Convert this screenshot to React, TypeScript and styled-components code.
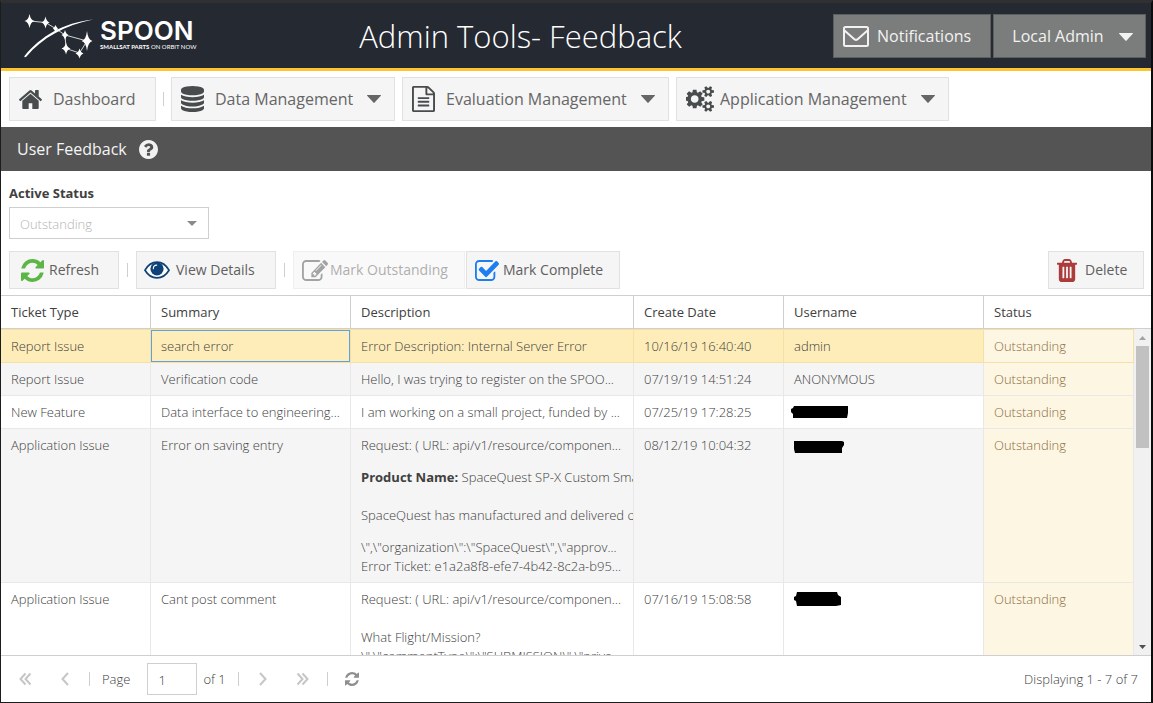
import React from 'react';
import styled, { createGlobalStyle, css } from 'styled-components';

const GlobalStyle = createGlobalStyle`
  *, *::before, *::after { box-sizing: border-box; }
  body {
    margin: 0;
    background: #fff;
    color: #404040;
    font: 400 13px/19px 'Open Sans', sans-serif;
  }
  button, input, select { font: inherit; color: inherit; margin: 0; border-radius: 0; }
`;

/* ---------- frame and header ---------- */

const Frame = styled.div`
  display: flex;
  flex-direction: column;
  height: 100vh;
  min-height: 480px;
  border-style: solid;
  border-width: 3px 2px 1px 1px;
  border-color: #303030 #0c0c0c #1c1c1c #1c1c1c;
`;

const Header = styled.header`
  display: flex;
  align-items: center;
  flex: none;
  height: 68px;
  padding: 0 5px 0 22px;
  background: #252932;
  border-bottom: 3px solid #fdc42d;
`;

const Brand = styled.a`
  display: flex;
  align-items: center;
  gap: 7px;
  width: 185px;
  color: #fff;
  text-decoration: none;
`;

const BrandText = styled.span`
  display: flex;
  flex-direction: column;
  white-space: nowrap;
`;

const BrandName = styled.span`
  font: 600 26px/22px Inter, sans-serif;
`;

const BrandTag = styled.span`
  font: 400 6px/10px Lato, sans-serif;
  b { font-weight: 700; }
`;

const PageTitle = styled.h1`
  flex: 1;
  margin: 0;
  color: #fff;
  font-size: 31px;
  font-weight: 300;
  line-height: 42px;
  text-align: center;
  white-space: nowrap;
`;

const HeaderActions = styled.div`
  display: flex;
  gap: 2px;
`;

/* ---------- buttons ---------- */

type BtnProps = { $width: number; $gap?: number; $pad?: number };

const BaseButton = styled.button<BtnProps>`
  display: flex;
  align-items: center;
  flex: none;
  width: ${(p) => p.$width}px;
  gap: ${(p) => p.$gap ?? 6}px;
  white-space: nowrap;
  text-align: left;
  cursor: pointer;
`;

const HeaderButton = styled(BaseButton)`
  height: 44px;
  padding: 2px 12px 0 9px;
  border: 1px solid #5c5f60;
  background: #7b7d7c;
  color: #f2f2f2;
  font-size: 16px;
`;

const NavButton = styled(BaseButton)`
  height: 44px;
  padding: 0 13px 0 9px;
  border: 1px solid #e1e1e1;
  background: #f5f5f5;
  color: #666;
  font-size: 16px;
`;

const ToolButton = styled(BaseButton)`
  height: 38px;
  padding: 0 8px 2px ${(p) => p.$pad ?? 8}px;
  border: 1px solid #e1e1e1;
  background: #f5f5f5;
  color: #606060;
  font-size: 14px;
  &:disabled { opacity: 0.5; cursor: default; }
  svg { margin-top: 2px; }
`;

const Caret = styled.svg`
  display: block;
  width: 14px;
  height: 8px;
  margin-left: auto;
  fill: currentColor;
`;

const Separator = styled.span<{ $space?: number }>`
  flex: none;
  width: 1px;
  height: 14px;
  margin: 0 ${(p) => p.$space ?? 8}px;
  background: #cfcfcf;
`;

/* ---------- bars ---------- */

const NavBar = styled.nav`
  display: flex;
  align-items: center;
  flex: none;
  gap: 7px;
  height: 56px;
  padding: 0 8px;
`;

const NavGroup = styled.div`
  display: flex;
  align-items: center;
`;

const PanelTitle = styled.div`
  display: flex;
  align-items: center;
  flex: none;
  gap: 12px;
  height: 44px;
  padding: 0 16px;
  background: #545454;
  color: #f5f5f5;
  h2 { margin: 0; font-size: 16px; font-weight: 400; line-height: 22px; }
`;

const HelpButton = styled.button`
  display: flex;
  padding: 0;
  border: 0;
  background: none;
  cursor: pointer;
`;

const Filters = styled.div`
  display: flex;
  flex-direction: column;
  align-items: flex-start;
  flex: none;
  gap: 4px;
  padding: 13px 8px 12px;
  label { font-weight: 700; }
`;

const SelectBox = styled.div`
  display: grid;
  align-items: center;
  width: 200px;
  height: 32px;
  > * { grid-area: 1 / 1; }
`;

const Select = styled.select`
  appearance: none;
  width: 100%;
  height: 32px;
  padding: 2px 30px 0 10px;
  border: 1px solid #cfcfcf;
  background: #fff;
  color: #b4b4b4;
  font-weight: 300;
`;

const SelectArrow = styled.svg`
  justify-self: end;
  width: 10px;
  height: 5px;
  margin-right: 12px;
  fill: #8a8a8a;
  pointer-events: none;
`;

const Toolbar = styled.div`
  display: flex;
  align-items: center;
  flex: none;
  padding: 0 7px 6px 8px;
`;

const ToolGroup = styled.div`
  display: flex;
  gap: 1px;
`;

const Spacer = styled.span`
  flex: 1;
`;

/* ---------- grid ---------- */

const Table = styled.table`
  width: 100%;
  table-layout: fixed;
  border-collapse: separate;
  border-spacing: 0;
`;

const HeadTable = styled(Table)`
  flex: none;
  border-top: 1px solid #cfcfcf;
  border-bottom: 1px solid #cfcfcf;
`;

const HeadCell = styled.th`
  height: 32px;
  padding: 0 10px;
  border-right: 1px solid #cfcfcf;
  font-weight: 400;
  text-align: left;
  &:last-child { border-right: 0; }
`;

const GridBody = styled.div`
  display: flex;
  flex: 1;
  min-height: 0;
`;

const Viewport = styled.div`
  flex: 1;
  min-width: 0;
  overflow: hidden;
`;

const Cell = styled.td<{ $status?: boolean; $focused?: boolean }>`
  padding: 7px 10px 6px;
  overflow: hidden;
  border-right: 1px solid #e8e8e8;
  border-bottom: 1px solid #e8e8e8;
  font-weight: 300;
  vertical-align: top;
  white-space: nowrap;
  ${(p) => p.$status && css`background: #fdf6e3; color: #8a6d3b;`}
  ${(p) => p.$focused && css`box-shadow: inset 0 0 0 1px #5fa2dd;`}
`;

const Row = styled.tr<{ $selected?: boolean }>`
  &:nth-child(even) { background: #f5f5f5; }
  ${(p) => p.$selected && css`
    background: #feedb9;
    ${Cell} { border-color: #f5e1a3; border-top: 1px solid #f5e1a3; }
  `}
`;

const Paragraph = styled.p`
  margin: 13px 0;
  strong { font-weight: 700; }
`;

const Redaction = styled.svg`
  display: block;
  width: 58px;
  height: 16px;
  margin: 2px 0 1px -3px;
  overflow: visible;
  fill: #000;
`;

const ScrollBar = styled.div`
  display: flex;
  flex-direction: column;
  align-items: center;
  flex: none;
  width: 17px;
  background: #f1f1f1;
`;

const ScrollArrow = styled.button`
  display: flex;
  align-items: center;
  justify-content: center;
  width: 17px;
  height: 17px;
  padding: 0;
  border: 0;
  background: none;
`;

const ScrollTrack = styled.div`
  flex: 1;
  width: 13px;
`;

const ScrollThumb = styled.div`
  height: 35%;
  background: #c1c1c1;
`;

/* ---------- paging ---------- */

const Pager = styled.footer`
  display: flex;
  align-items: center;
  flex: none;
  height: 47px;
  padding: 0 13px 0 12px;
  border-top: 1px solid #cfcfcf;
  font-weight: 300;
`;

const PageButton = styled.button`
  display: flex;
  align-items: center;
  justify-content: center;
  width: 24px;
  height: 24px;
  padding: 0;
  border: 0;
  background: none;
  color: #8f8f8f;
  & + & { margin-left: 16px; }
  &:disabled { color: #c6c6c6; }
`;

const PageLabel = styled.label`
  display: flex;
  align-items: center;
  gap: 17px;
  padding-right: 6px;
`;

const PageInput = styled.input`
  width: 50px;
  height: 32px;
  padding: 2px 10px 0;
  border: 1px solid #cfcfcf;
  background: #fff;
  font-weight: 300;
`;

/* ---------- drawings ---------- */

type IconProps = { box: string; w: number; h: number; d: string; color?: string };

const Icon = ({ box, w, h, d, color = 'currentColor' }: IconProps) => (
  <svg viewBox={box} width={w} height={h} fill={color} preserveAspectRatio="none" aria-hidden="true">
    <path d={d} />
  </svg>
);

const P = {
  home: 'M1472 992v480q0 26-19 45t-45 19h-384v-384h-256v384h-384q-26 0-45-19t-19-45v-480q0-1 .5-3t.5-3l575-474 575 474q1 2 1 6zm223-69l-62 74q-8 9-21 11h-3q-13 0-21-7l-692-577-692 577q-12 8-24 7-13-2-21-11l-62-74q-8-10-7-23.5t11-21.5l719-599q32-26 76-26t76 26l244 204v-195q0-14 9-23t23-9h192q14 0 23 9t9 23v408l219 182q10 8 11 21.5t-7 23.5z',
  database: 'M896 768q237 0 443-43t325-127v170q0 69-103 128t-280 93.5-385 34.5-385-34.5-280-93.5-103-128v-170q119 84 325 127t443 43zm0 768q237 0 443-43t325-127v170q0 69-103 128t-280 93.5-385 34.5-385-34.5-280-93.5-103-128v-170q119 84 325 127t443 43zm0-384q237 0 443-43t325-127v170q0 69-103 128t-280 93.5-385 34.5-385-34.5-280-93.5-103-128v-170q119 84 325 127t443 43zm0-1152q208 0 385 34.5t280 93.5 103 128v128q0 69-103 128t-280 93.5-385 34.5-385-34.5-280-93.5-103-128v-128q0-69 103-128t280-93.5 385-34.5z',
  file: 'M1596 380q28 28 48 76t20 88v1152q0 40-28 68t-68 28h-1344q-40 0-68-28t-28-68v-1600q0-40 28-68t68-28h896q40 0 88 20t76 48zm-444-244v376h376q-10-29-22-41l-313-313q-12-12-41-22zm384 1528v-1024h-416q-40 0-68-28t-28-68v-416h-768v1536h1280zm-1024-864q0-14 9-23t23-9h704q14 0 23 9t9 23v64q0 14-9 23t-23 9h-704q-14 0-23-9t-9-23v-64zm736 224q14 0 23 9t9 23v64q0 14-9 23t-23 9h-704q-14 0-23-9t-9-23v-64q0-14 9-23t23-9h704zm0 256q14 0 23 9t9 23v64q0 14-9 23t-23 9h-704q-14 0-23-9t-9-23v-64q0-14 9-23t23-9h704z',
  cogs: 'M832 896q0-106-75-181t-181-75-181 75-75 181 75 181 181 75 181-75 75-181zm768 512q0-52-38-90t-90-38-90 38-38 90q0 53 37.5 90.5t90.5 37.5 90.5-37.5 37.5-90.5zm0-1024q0-52-38-90t-90-38-90 38-38 90q0 53 37.5 90.5t90.5 37.5 90.5-37.5 37.5-90.5zm-384 421v185q0 10-7 19.5t-16 10.5l-155 24q-11 35-32 76 34 48 90 115 7 11 7 20 0 12-7 19-23 30-82.5 89.5t-78.5 59.5q-11 0-21-7l-115-90q-37 19-77 31-11 108-23 155-7 24-30 24h-186q-11 0-20-7.5t-10-17.5l-23-153q-34-10-75-31l-118 89q-7 7-20 7-11 0-21-8-144-133-144-160 0-9 7-19 10-14 41-53t47-61q-23-44-35-82l-152-24q-10-1-17-9.5t-7-19.5v-185q0-10 7-19.5t16-10.5l155-24q11-35 32-76-34-48-90-115-7-11-7-20 0-12 7-20 22-30 82-89t79-59q11 0 21 7l115 90q34-18 77-32 11-108 23-154 7-24 30-24h186q11 0 20 7.5t10 17.5l23 153q34 10 75 31l118-89q8-7 20-7 11 0 21 8 144 133 144 160 0 8-7 19-12 16-42 54t-45 60q23 48 34 82l152 23q10 2 17 10.5t7 19.5zm640 533v140q0 16-149 31-12 27-30 52 51 113 51 138 0 4-4 7-122 71-124 71-8 0-46-47t-52-68q-20 2-30 2t-30-2q-14 21-52 68t-46 47q-2 0-124-71-4-3-4-7 0-25 51-138-18-25-30-52-149-15-149-31v-140q0-16 149-31 13-29 30-52-51-113-51-138 0-4 4-7 4-2 35-20t59-34 30-16q8 0 46 46.5t52 67.5q20-2 30-2t30 2q51-71 92-112l6-2q4 0 124 70 4 3 4 7 0 25-51 138 17 23 30 52 149 15 149 31zm0-1024v140q0 16-149 31-12 27-30 52 51 113 51 138 0 4-4 7-122 71-124 71-8 0-46-47t-52-68q-20 2-30 2t-30-2q-14 21-52 68t-46 47q-2 0-124-71-4-3-4-7 0-25 51-138-18-25-30-52-149-15-149-31v-140q0-16 149-31 13-29 30-52-51-113-51-138 0-4 4-7 4-2 35-20t59-34 30-16q8 0 46 46.5t52 67.5q20-2 30-2t30 2q51-71 92-112l6-2q4 0 124 70 4 3 4 7 0 25-51 138 17 23 30 52 149 15 149 31z',
  help: 'M1024 1376v-192q0-14-9-23t-23-9h-192q-14 0-23 9t-9 23v192q0 14 9 23t23 9h192q14 0 23-9t9-23zm256-672q0-88-55.5-163t-138.5-116-170-41q-243 0-371 213-15 24 8 42l132 100q7 6 19 6 16 0 25-12 53-68 86-92 34-24 86-24 48 0 85.5 26t37.5 59q0 38-20 61t-68 45q-63 28-115.5 86.5t-52.5 125.5v36q0 14 9 23t23 9h192q14 0 23-9t9-23q0-19 21.5-49.5t54.5-49.5q32-18 49-28.5t46-35 44.5-48 28-60.5 12.5-81zm384 192q0 209-103 385.5t-279.5 279.5-385.5 103-385.5-103-279.5-279.5-103-385.5 103-385.5 279.5-279.5 385.5-103 385.5 103 279.5 279.5 103 385.5z',
  refresh: 'M1639 1056q0 5-1 7-64 268-268 434.5t-478 166.5q-146 0-282.5-55t-243.5-157l-129 129q-19 19-45 19t-45-19-19-45v-448q0-26 19-45t45-19h448q26 0 45 19t19 45-19 45l-137 137q71 66 161 102t187 36q134 0 250-65t186-179q11-17 53-117 8-23 30-23h192q13 0 22.5 9.5t9.5 22.5zm25-800v448q0 26-19 45t-45 19h-448q-26 0-45-19t-19-45 19-45l138-138q-148-137-349-137-134 0-250 65t-186 179q-11 17-53 117-8 23-30 23h-199q-13 0-22.5-9.5t-9.5-22.5v-7q65-268 270-434.5t480-166.5q146 0 284 55.5t245 156.5l130-129q19-19 45-19t45 19 19 45z',
  pencil: 'M888 1184l116-116-152-152-116 116v56h96v96h56zm440-720q-16-16-33 1l-350 350q-17 17-1 33t33-1l350-350q17-17 1-33zm80 594v190q0 119-84.5 203.5t-203.5 84.5h-832q-119 0-203.5-84.5t-84.5-203.5v-832q0-119 84.5-203.5t203.5-84.5h832q63 0 117 25 15 7 18 23 3 17-9 29l-49 49q-14 14-32 8-23-6-45-6h-832q-66 0-113 47t-47 113v832q0 66 47 113t113 47h832q66 0 113-47t47-113v-126q0-13 9-22l64-64q15-15 35-7t20 29zm-96-738l288 288-672 672h-288v-288zm444 132l-92 92-288-288 92-92q28-28 68-28t68 28l152 152q28 28 28 68t-28 68z',
  check: 'M1408 930v318q0 119-84.5 203.5t-203.5 84.5h-832q-119 0-203.5-84.5t-84.5-203.5v-832q0-119 84.5-203.5t203.5-84.5h832q63 0 117 25 15 7 18 23 3 17-9 29l-49 49q-10 10-23 10-3 0-9-2-23-6-45-6h-832q-66 0-113 47t-47 113v832q0 66 47 113t113 47h832q66 0 113-47t47-113v-254q0-13 9-22l64-64q10-10 23-10 6 0 12 3 20 8 20 29zm231-489l-814 814q-24 24-57 24t-57-24l-430-430q-24-24-24-57t24-57l110-110q24-24 57-24t57 24l263 263 647-647q24-24 57-24t57 24l110 110q24 24 24 57t-24 57z',
  trash: 'M704 1376v-704q0-14-9-23t-23-9h-64q-14 0-23 9t-9 23v704q0 14 9 23t23 9h64q14 0 23-9t9-23zm256 0v-704q0-14-9-23t-23-9h-64q-14 0-23 9t-9 23v704q0 14 9 23t23 9h64q14 0 23-9t9-23zm256 0v-704q0-14-9-23t-23-9h-64q-14 0-23 9t-9 23v704q0 14 9 23t23 9h64q14 0 23-9t9-23zm-544-992h448l-48-117q-7-9-17-11h-317q-10 2-17 11zm928 32v64q0 14-9 23t-23 9h-96v948q0 83-47 143.5t-113 60.5h-832q-66 0-113-58.5t-47-141.5v-952h-96q-14 0-23-9t-9-23v-64q0-14 9-23t23-9h309l70-167q15-37 54-63t79-26h320q40 0 79 26t54 63l70 167h309q14 0 23 9t9 23z',
};

const Down = () => (
  <Caret viewBox="0 0 14 8" aria-hidden="true"><path d="M.4 0h13.2c.4 0 .5.4.2.7L7.6 7.6a.8.8 0 0 1-1.2 0L.2.7C-.1.4 0 0 .4 0z" /></Caret>
);

const EnvelopeIcon = () => (
  <svg width="26" height="21" viewBox="0 0 26 21" fill="none" stroke="currentColor" strokeWidth="2" aria-hidden="true">
    <rect x="1" y="1" width="24" height="19" rx="1.5" />
    <path d="M1.5 4.500L10.500 12.500c1.800 1.900 3.200 1.900 5 0L24.500 4.500" />
  </svg>
);

const EyeIcon = () => (
  <svg width="26" height="18" viewBox="0 0 26 18" aria-hidden="true">
    <path d="M1 9.200C4 4 8.300 1.200 13 1.200S22 4 25 9.200C22 14.200 17.700 16.900 13 16.900S4 14.200 1 9.200z" fill="#fff" stroke="#0e4279" strokeWidth="1.700" />
    <circle cx="13" cy="7.800" r="6.600" fill="#0e4279" />
    <path d="M9.300 7.700c0-2 1.500-3.500 3.400-3.600" fill="none" stroke="#fff" strokeWidth="1.100" strokeLinecap="round" />
  </svg>
);

const star = (x: number, y: number, rx: number, ry: number) =>
  `M${x} ${y - ry}Q${x + 1} ${y - 1} ${x + rx} ${y}Q${x + 1} ${y + 1} ${x} ${y + ry}Q${x - 1} ${y + 1} ${x - rx} ${y}Q${x - 1} ${y - 1} ${x} ${y - ry}z`;

const Constellation = () => (
  <svg width="70" height="46" viewBox="0 0 70 46" fill="#fff" aria-hidden="true">
    <path d="M6.500 8L22.500 9.500 32.500 15.500 42 22 64 28 56.500 40 43 35.500 42 22" fill="none" stroke="#fff" strokeWidth=".8" />
    <path d="M1.500 43C18 23 40 10 70 6.500 42 12 19 25 3.500 43.500c-1 1.200-2.500.8-2-.5z" />
    <path d={star(6.5, 8, 5, 7)} />
    <path d={star(22.5, 9.5, 4, 6)} />
    <path d={star(32.5, 15.5, 2.5, 3.5)} />
    <path d={star(42, 22, 3.5, 5)} />
    <path d={star(64, 28, 5.5, 10)} />
    <path d={star(43, 35.5, 4.5, 6)} />
    <path d={star(56.5, 40.5, 4, 5)} />
  </svg>
);

const Chevrons = ({ d, w }: { d: string; w: number }) => (
  <svg width={w} height="14" viewBox={`0 0 ${w} 14`} fill="none" stroke="currentColor" strokeWidth="2" aria-hidden="true">
    <path d={d} />
  </svg>
);

/* ---------- data ---------- */

const WIDTHS = [150, 200, undefined, 150, 200, 150];
const HEADINGS = ['Ticket Type', 'Summary', 'Description', 'Create Date', 'Username', 'Status'];

const REDACTED = [
  'M3 1H57V8L56 13H2V9L0 7V4L2 3z',
  'M3 3H51L53 4V7L51 10V15H4L3 11z',
  'M6 0H46L47 3 50 5V13L45 14H6L5 9 3 8V5L5 4z',
];

type Ticket = {
  type: string;
  summary: string;
  description: React.ReactNode;
  date: string;
  user: React.ReactNode;
};

const mask = (i: number) => (
  <Redaction viewBox="0 0 58 16" role="img" aria-label="Hidden user"><path d={REDACTED[i]} /></Redaction>
);

const TICKETS: Ticket[] = [
  { type: 'Report Issue', summary: 'search error', description: 'Error Description: Internal Server Error', date: '10/16/19 16:40:40', user: 'admin' },
  { type: 'Report Issue', summary: 'Verification code', description: 'Hello, I was trying to register on the SPOO...', date: '07/19/19 14:51:24', user: 'ANONYMOUS' },
  { type: 'New Feature', summary: 'Data interface to engineering...', description: 'I am working on a small project, funded by ...', date: '07/25/19 17:28:25', user: mask(0) },
  {
    type: 'Application Issue',
    summary: 'Error on saving entry',
    description: (
      <>
        Request: ( URL: api/v1/resource/componen...
        <Paragraph><strong>Product Name:</strong> SpaceQuest SP-X Custom Sma<br /><br />SpaceQuest has manufactured and delivered o</Paragraph>
        {'\\",\\"organization\\":\\"SpaceQuest\\",\\"approv...'}<br />
        Error Ticket: e1a2a8f8-efe7-4b42-8c2a-b95...
      </>
    ),
    date: '08/12/19 10:04:32',
    user: mask(1),
  },
  {
    type: 'Application Issue',
    summary: 'Cant post comment',
    description: (
      <>
        Request: ( URL: api/v1/resource/componen...<br /><br />
        What Flight/Mission?<br />
        {'\\",\\"commentType\\":\\"SUBMISSION\\",\\"priva...'}
      </>
    ),
    date: '07/16/19 15:08:58',
    user: mask(2),
  },
];

const Columns = ({ extra = 0 }: { extra?: number }) => (
  <colgroup>
    {WIDTHS.map((w, i) => <col key={i} width={w && i === 5 ? w + extra : w} />)}
  </colgroup>
);

export default function App() {
  return (
    <>
      <GlobalStyle />
      <Frame>
        <Header>
          <Brand href="#">
            <Constellation />
            <BrandText>
              <BrandName>SPOON</BrandName>
              <BrandTag><b>SMALLSAT PARTS</b> ON ORBIT NOW</BrandTag>
            </BrandText>
          </Brand>
          <PageTitle>Admin Tools- Feedback</PageTitle>
          <HeaderActions>
            <HeaderButton $width={158} $gap={8}><EnvelopeIcon />Notifications</HeaderButton>
            <HeaderButton $width={153}><Spacer />Local Admin<Spacer /><Down /></HeaderButton>
          </HeaderActions>
        </Header>

        <NavBar>
          <NavGroup>
            <NavButton $width={147} $gap={11}><Icon box="88 253 1616 1283" w={23} h={19} d={P.home} color="#484c4c" />Dashboard</NavButton>
            <Separator $space={7} />
            <NavButton $width={224} $gap={11}><Icon box="128 0 1536 1792" w={23} h={26} d={P.database} color="#484c4c" />Data Management<Down /></NavButton>
          </NavGroup>
          <NavButton $width={267} $gap={11}><Icon box="128 0 1536 1792" w={23} h={26} d={P.file} color="#484c4c" />Evaluation Management<Down /></NavButton>
          <NavButton $width={273}><Icon box="0 0 1856 1792" w={28} h={26} d={P.cogs} color="#484c4c" />Application Management<Down /></NavButton>
        </NavBar>

        <PanelTitle>
          <h2>User Feedback</h2>
          <HelpButton aria-label="Help"><Icon box="128 128 1536 1536" w={19} h={19} d={P.help} color="#f2f2f2" /></HelpButton>
        </PanelTitle>

        <Filters>
          <label htmlFor="status">Active Status</label>
          <SelectBox>
            <Select id="status" defaultValue="Outstanding"><option>Outstanding</option></Select>
            <SelectArrow viewBox="0 0 10 5" aria-hidden="true"><path d="M0 0h10L5 5z" /></SelectArrow>
          </SelectBox>
        </Filters>

        <Toolbar>
          <ToolButton $width={110} $pad={11} $gap={5}><Icon box="128 128 1536 1536" w={23} h={23} d={P.refresh} color="#5cb646" />Refresh</ToolButton>
          <Separator />
          <ToolButton $width={140} $pad={7}><EyeIcon />View Details</ToolButton>
          <Separator />
          <ToolGroup>
            <ToolButton $width={172} $gap={2} disabled><Icon box="0 128 1784 1408" w={26} h={21} d={P.pencil} color="#484c4c" />Mark Outstanding</ToolButton>
            <ToolButton $width={154} $gap={4}><Icon box="0 128 1663 1408" w={24} h={21} d={P.check} color="#1e7ef0" />Mark Complete</ToolButton>
          </ToolGroup>
          <Spacer />
          <ToolButton $width={96} $gap={8}><Icon box="192 128 1408 1536" w={20} h={23} d={P.trash} color="#ac3c3c" />Delete</ToolButton>
        </Toolbar>

        <HeadTable role="presentation">
          <Columns extra={17} />
          <thead>
            <tr>{HEADINGS.map((h) => <HeadCell key={h} scope="col">{h}</HeadCell>)}</tr>
          </thead>
        </HeadTable>
        <GridBody>
          <Viewport>
            <Table aria-label="User feedback">
              <Columns />
              <tbody>
                {TICKETS.map((t, i) => (
                  <Row key={i} $selected={i === 0}>
                    <Cell>{t.type}</Cell>
                    <Cell $focused={i === 0}>{t.summary}</Cell>
                    <Cell>{t.description}</Cell>
                    <Cell>{t.date}</Cell>
                    <Cell>{t.user}</Cell>
                    <Cell $status>Outstanding</Cell>
                  </Row>
                ))}
              </tbody>
            </Table>
          </Viewport>
          <ScrollBar>
            <ScrollArrow aria-label="Scroll up"><svg width="7" height="4" viewBox="0 0 7 4" fill="#a3a3a3"><path d="M0 4h7L3.500 0z" /></svg></ScrollArrow>
            <ScrollTrack><ScrollThumb /></ScrollTrack>
            <ScrollArrow aria-label="Scroll down"><svg width="7" height="4" viewBox="0 0 7 4" fill="#505050"><path d="M0 0h7L3.500 4z" /></svg></ScrollArrow>
          </ScrollBar>
        </GridBody>

        <Pager>
          <PageButton disabled aria-label="First page"><Chevrons w={12} d="M6.500 1.500L1.500 7l5 5.500M11.500 1.500L6.500 7l5 5.500" /></PageButton>
          <PageButton disabled aria-label="Previous page"><Chevrons w={8} d="M7 1L1.500 7 7 13" /></PageButton>
          <Separator $space={12} />
          <PageLabel>Page<PageInput defaultValue="1" /></PageLabel>
          of 1
          <Separator $space={12} />
          <PageButton disabled aria-label="Next page"><Chevrons w={8} d="M1 1l5.500 6L1 13" /></PageButton>
          <PageButton disabled aria-label="Last page"><Chevrons w={12} d="M.5 1.500l5 5.500-5 5.500M5.500 1.500l5 5.500-5 5.500" /></PageButton>
          <Separator $space={12} />
          <PageButton aria-label="Reload"><Icon box="128 128 1536 1536" w={14} h={14} d={P.refresh} /></PageButton>
          <Spacer />
          Displaying 1 - 7 of 7
        </Pager>
      </Frame>
    </>
  );
}
